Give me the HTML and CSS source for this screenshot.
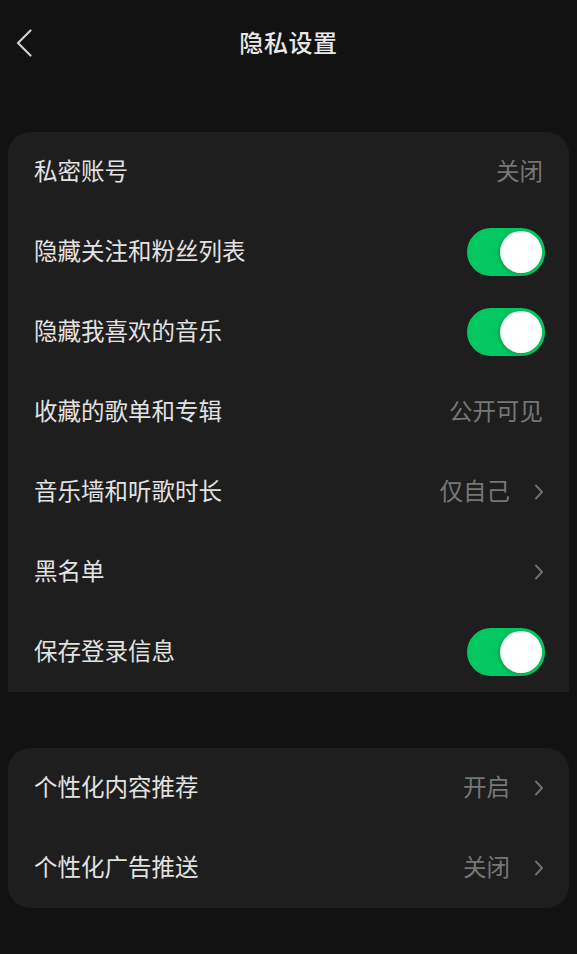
FILE: index.html
```html
<!DOCTYPE html>
<html lang="zh-CN">
<head>
<meta charset="utf-8">
<title>隐私设置</title>
<link rel="stylesheet" href="styles.css">
</head>
<body>
<div class="page">
  <header class="header">
    <svg class="back" width="16" height="28" viewBox="0 0 16 28"><path d="M14.5 1.5 L2 14 L14.5 26.5" fill="none" stroke="#cfcfcf" stroke-width="2.2" stroke-linecap="round" stroke-linejoin="round"/></svg>
    <h1 class="title">隐私设置</h1>
  </header>

  <section class="card card-open">
    <div class="row"><span class="label">私密账号</span><span class="value">关闭</span></div>
    <div class="row"><span class="label">隐藏关注和粉丝列表</span><span class="toggle on"><span class="knob"></span></span></div>
    <div class="row"><span class="label">隐藏我喜欢的音乐</span><span class="toggle on"><span class="knob"></span></span></div>
    <div class="row"><span class="label">收藏的歌单和专辑</span><span class="value">公开可见</span></div>
    <div class="row"><span class="label">音乐墙和听歌时长</span><span class="value">仅自己</span><svg class="chev" width="10" height="16" viewBox="0 0 10 16"><path d="M2 1.5 L8 8 L2 14.5" fill="none" stroke="#6e6e6e" stroke-width="2" stroke-linecap="round" stroke-linejoin="round"/></svg></div>
    <div class="row"><span class="label">黑名单</span><svg class="chev" width="10" height="16" viewBox="0 0 10 16"><path d="M2 1.5 L8 8 L2 14.5" fill="none" stroke="#6e6e6e" stroke-width="2" stroke-linecap="round" stroke-linejoin="round"/></svg></div>
    <div class="row"><span class="label">保存登录信息</span><span class="toggle on"><span class="knob"></span></span></div>
  </section>

  <section class="card card-round">
    <div class="row"><span class="label">个性化内容推荐</span><span class="value">开启</span><svg class="chev" width="10" height="16" viewBox="0 0 10 16"><path d="M2 1.5 L8 8 L2 14.5" fill="none" stroke="#6e6e6e" stroke-width="2" stroke-linecap="round" stroke-linejoin="round"/></svg></div>
    <div class="row"><span class="label">个性化广告推送</span><span class="value">关闭</span><svg class="chev" width="10" height="16" viewBox="0 0 10 16"><path d="M2 1.5 L8 8 L2 14.5" fill="none" stroke="#6e6e6e" stroke-width="2" stroke-linecap="round" stroke-linejoin="round"/></svg></div>
  </section>
</div>
</body>
</html>
```

FILE: styles.css
```css
html, body {
  margin: 0;
  padding: 0;
  background: #121212;
}
body {
  font-family: "Noto Sans CJK SC", "Noto Sans", sans-serif;
  width: 577px;
  height: 954px;
  overflow: hidden;
}
.page {
  display: flex;
  flex-direction: column;
}
.header {
  height: 86px;
  display: flex;
  align-items: center;
  justify-content: center;
  position: relative;
}
.back {
  position: absolute;
  left: 16px;
  top: 29px;
}
.title {
  margin: 0;
  padding-bottom: 4px;
  font-size: 24px;
  font-weight: 500;
  color: #e8e8e8;
  letter-spacing: 0.6px;
}
.card {
  margin: 0 8px;
  background: #1e1e1e;
  display: flex;
  flex-direction: column;
}
.card-open {
  margin-top: 46px;
  border-radius: 22px 22px 0 0;
}
.card-round {
  margin-top: 56px;
  border-radius: 22px;
}
.row {
  height: 80px;
  display: flex;
  align-items: center;
  padding: 0 24px 0 26px;
}
.label {
  flex: 1;
  font-size: 23.5px;
  color: #e2e2e2;
  padding-bottom: 4px;
}
.value {
  font-size: 23.5px;
  color: #777777;
  margin-right: 2px;
  padding-bottom: 4px;
}
.chev {
  margin-left: 21px;
  margin-right: 1px;
}
.row .value + .chev {
  margin-left: 22px;
}
.toggle {
  width: 78px;
  height: 48px;
  border-radius: 24px;
  background: #2a2a2a;
  display: flex;
  align-items: center;
  padding: 0 3px;
  box-sizing: border-box;
}
.toggle.on {
  background: #03c862;
  justify-content: flex-end;
}
.knob {
  width: 42px;
  height: 42px;
  border-radius: 50%;
  background: #ffffff;
  box-shadow: -2px 1px 4px rgba(0, 0, 0, 0.18);
}
```
